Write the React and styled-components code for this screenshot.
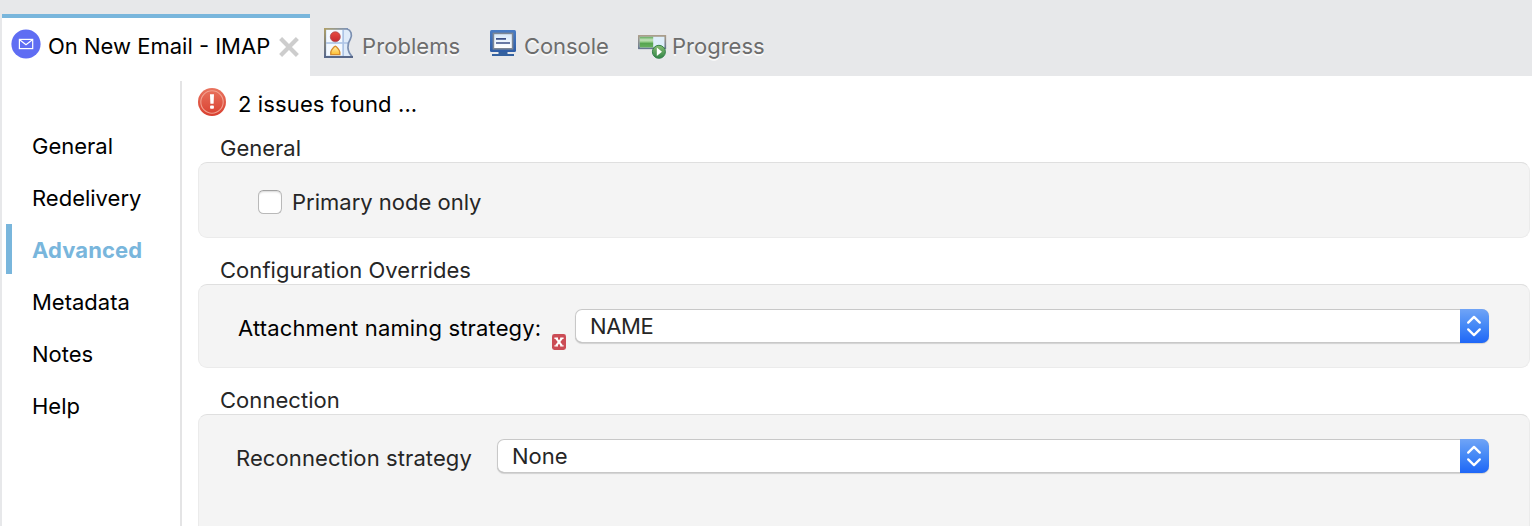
import React from "react";
import styled, { createGlobalStyle, css } from "styled-components";

const GlobalStyle = createGlobalStyle`
  *, *::before, *::after { box-sizing: border-box; }
  body {
    margin: 0;
    overflow: hidden;
    background: #fff;
    color: #000;
    font-family: Inter, "Liberation Sans", sans-serif;
    font-size: 22px;
    line-height: 28px;
  }
`;

const Window = styled.div`
  display: flex;
  flex-direction: column;
  width: 1532px;
  height: 526px;
  overflow: hidden;
`;

const TabBar = styled.header`
  display: flex;
  align-items: flex-end;
  flex: none;
  height: 76px;
  padding-left: 2px;
  background: #e7e8ea;
`;

const Label = styled.span`
  flex: none;
  white-space: nowrap;
  letter-spacing: ${(p) => p.$track ?? 0}px;
`;

const Tab = styled.div`
  display: flex;
  align-items: center;
  flex: none;
  height: 62px;
  width: ${(p) => p.$width}px;
  padding: 2px 0 0 14px;
  color: #6d6d6d;
  text-shadow: 0 2px 0 rgba(255, 255, 255, 0.75);
  ${(p) =>
    p.$active &&
    css`
      padding: 0 10px 2px 9px;
      border-top: 4px solid #79b6dc;
      background: #fff;
      color: #000;
      text-shadow: none;
    `}
`;

const TabIcon = styled.span`
  display: flex;
  flex: none;
  margin-right: ${(p) => p.$gap}px;
  padding-bottom: ${(p) => Math.max(p.$lift, 0)}px;
  padding-top: ${(p) => Math.max(-p.$lift, 0)}px;
`;

const CloseButton = styled.button`
  display: flex;
  margin: 2px 0 0 auto;
  padding: 0;
  border: 0;
  background: none;
`;

const Body = styled.div`
  display: flex;
  flex: 1;
  min-height: 0;
  border-left: 2px solid #e7e8ea;
`;

const Sidebar = styled.nav`
  display: flex;
  flex-direction: column;
  flex: none;
  width: 180px;
  margin-top: 5px;
  padding: 39px 0 0 4px;
  border-right: 2px solid #e4e4e5;
`;

const NavItem = styled.a`
  display: flex;
  align-items: center;
  height: 50px;
  margin-bottom: 2px;
  padding: 2px 0 0 20px;
  border-left: 6px solid ${(p) => (p.$active ? "#79b6dc" : "transparent")};
  color: ${(p) => (p.$active ? "#79b6dc" : "#000")};
  font-weight: ${(p) => (p.$active ? 700 : 400)};
`;

const Main = styled.main`
  flex: 1;
  min-width: 0;
  padding: 12px 2px 0 16px;
`;

const Issues = styled.div`
  display: flex;
  gap: 12px;
  height: 46px;
  svg { flex: none; }
  span { margin-top: 2px; }
`;

const Section = styled.section`
  margin-bottom: ${(p) => p.$after ?? 0}px;
`;

const Title = styled.h2`
  height: 28px;
  margin: 0 0 0 22px;
  color: #262626;
  font-size: 22px;
  font-weight: 400;
`;

const Group = styled.div`
  display: flex;
  align-items: flex-start;
  height: ${(p) => p.$height}px;
  padding: ${(p) => p.$pad};
  border: 1px solid #ebebeb;
  border-top-color: #dfdfdf;
  border-radius: 9px;
  background: #f4f4f4;
  color: #262626;
`;

const CheckRow = styled.label`
  display: flex;
  align-items: center;
  gap: 10px;
`;

const Checkbox = styled.span`
  width: 24px;
  height: 24px;
  border: 1px solid #b9b9b9;
  border-top-color: #a2a2a2;
  border-radius: 5.5px;
  background: #fff;
  box-shadow: inset 0 2px 2px -1px rgba(0, 0, 0, 0.16);
`;

const FieldLabel = styled.div`
  flex: none;
  width: ${(p) => p.$width}px;
  padding-top: 5px;
  color: ${(p) => (p.$dark ? "#000" : "#262626")};
`;

const ErrorMark = styled.div`
  display: flex;
  flex: none;
  width: 23px;
  padding-top: 25px;
`;

const Select = styled.div`
  display: flex;
  flex: 1;
  height: 34px;
  border-radius: 7px;
  background: #fff;
  box-shadow: inset 0 0 0 1px #c8c8c8, inset 0 -1px 0 #b0b0b0, 0 1px 1px rgba(0, 0, 0, 0.14);
`;

const SelectValue = styled.div`
  flex: 1;
  padding: 3px 0 0 15px;
`;

const Stepper = styled.div`
  display: flex;
  align-items: center;
  justify-content: center;
  width: 29px;
  border-radius: 0 7px 7px 0;
  background: linear-gradient(#70a4f6, #4488f6 50%, #1e66f7);
`;

const MailIcon = () => (
  <svg width="30" height="30" viewBox="0 0 30 30">
    <circle cx="15" cy="15" r="14.6" fill="#5f6df3" />
    <g fill="none" stroke="#fff" strokeWidth="1.2">
      <rect x="8.4" y="10.4" width="13.3" height="9.2" />
      <path d="M8.6 10.8 L15 15.8 L21.4 10.8" />
    </g>
  </svg>
);

const CloseIcon = () => (
  <svg width="22" height="22" viewBox="0 0 22 22">
    <path d="M2.6 2.6 L19.4 19.4 M19.4 2.6 L2.6 19.4" stroke="#cdcdcd" strokeWidth="4.2" />
  </svg>
);

const ProblemsIcon = () => (
  <svg width="30" height="30" viewBox="0 0 30 30">
    <defs>
      <linearGradient id="pbEdge" x1="0" y1="0" x2="0" y2="1">
        <stop offset="0" stopColor="#b0a068" />
        <stop offset="1" stopColor="#56668c" />
      </linearGradient>
      <linearGradient id="pbTop" gradientUnits="userSpaceOnUse" x1="0" y1="0" x2="24" y2="0">
        <stop offset="0" stopColor="#b0a068" />
        <stop offset="1" stopColor="#7c92b8" />
      </linearGradient>
      <linearGradient id="pbRed" x1="0" y1="0" x2="0" y2="1">
        <stop offset="0" stopColor="#e84a40" />
        <stop offset="1" stopColor="#c42931" />
      </linearGradient>
      <linearGradient id="pbYellow" x1="0" y1="0" x2="0" y2="1">
        <stop offset="0" stopColor="#fff0ae" />
        <stop offset="1" stopColor="#ffbd2c" />
      </linearGradient>
    </defs>
    <path d="M1 1 H23 C27 2 28.6 6.5 26.4 11 C23 16 22.5 23 28.5 29 H1 Z" fill="#dfebf9" />
    <path d="M3 2 H18 V14 H3 Z M3 16 H18 V27 H3 Z" fill="#f4f9ff" />
    <path d="M19.2 2 V28 M2 15 H24" stroke="#adc4e5" strokeWidth="1.6" />
    <path d="M23 1 C27 2 28.6 6.5 26.4 11 C23 16 22.5 23 28.5 29" fill="none" stroke="#7b8fb1" strokeWidth="1.7" />
    <rect x="0" y="0" width="24" height="1.8" fill="url(#pbTop)" />
    <rect x="0" y="0" width="2" height="30" fill="url(#pbEdge)" />
    <path d="M0 29 H29" stroke="#576789" strokeWidth="2" />
    <circle cx="11.3" cy="8.8" r="5" fill="url(#pbRed)" stroke="#a94a50" strokeWidth="0.8" />
    <path d="M11.3 18.3 C12.5 18.3 15.8 22.5 15.8 24 V26.6 H6.8 V24 C6.8 22.5 10.1 18.3 11.3 18.3 Z" fill="url(#pbYellow)" stroke="#d68b2c" strokeWidth="1.4" />
  </svg>
);

const ConsoleIcon = () => (
  <svg width="26" height="28" viewBox="0 0 26 28">
    <defs>
      <linearGradient id="csBody" x1="0" y1="0" x2="0" y2="1">
        <stop offset="0" stopColor="#4a7cc4" />
        <stop offset="1" stopColor="#2e5ca5" />
      </linearGradient>
      <linearGradient id="csScreen" x1="0" y1="0" x2="0" y2="1">
        <stop offset="0" stopColor="#d8e9fb" />
        <stop offset="1" stopColor="#fff" />
      </linearGradient>
    </defs>
    <rect x="0" y="0" width="26" height="22" rx="1.5" fill="url(#csBody)" />
    <rect x="2.6" y="2.6" width="20.8" height="17" fill="#7d8796" />
    <rect x="4.2" y="4.2" width="17.6" height="13.8" fill="url(#csScreen)" />
    <path d="M6 8.8 H16 M6 13 H20" stroke="#3b4f87" strokeWidth="1.7" />
    <path d="M8.5 22 H17.5 V24 H24 V26 H2 V24 H8.5 Z" fill="#34619f" />
  </svg>
);

const ProgressIcon = () => (
  <svg width="30" height="26" viewBox="0 0 30 26">
    <defs>
      <linearGradient id="pgFrame" x1="0" y1="0" x2="0" y2="1">
        <stop offset="0" stopColor="#a89b88" />
        <stop offset="1" stopColor="#66768f" />
      </linearGradient>
      <linearGradient id="pgBar" x1="0" y1="0" x2="0" y2="1">
        <stop offset="0" stopColor="#61ab5c" />
        <stop offset="0.3" stopColor="#c3e3bc" />
        <stop offset="0.5" stopColor="#8fca84" />
        <stop offset="0.6" stopColor="#55a350" />
        <stop offset="1" stopColor="#66b15e" />
      </linearGradient>
      <linearGradient id="pgBall" x1="0" y1="0" x2="0" y2="1">
        <stop offset="0" stopColor="#86bd72" />
        <stop offset="1" stopColor="#328547" />
      </linearGradient>
    </defs>
    <rect x="0.9" y="0.9" width="26.4" height="12.4" fill="#deeefa" stroke="url(#pgFrame)" strokeWidth="1.7" />
    <rect x="1.8" y="1.8" width="13.4" height="10.6" fill="url(#pgBar)" />
    <circle cx="20.9" cy="16.8" r="6.5" fill="url(#pgBall)" stroke="#34814a" strokeWidth="1" />
    <path d="M18.8 12.6 L24 16.8 L18.8 21 Z" fill="#fff" />
  </svg>
);

const AlertIcon = () => (
  <svg width="28" height="28" viewBox="0 0 28 28">
    <defs>
      <linearGradient id="alBall" x1="0" y1="0" x2="0" y2="1">
        <stop offset="0" stopColor="#e9745f" />
        <stop offset="1" stopColor="#d93f2f" />
      </linearGradient>
    </defs>
    <circle cx="14" cy="14" r="14" fill="url(#alBall)" />
    <circle cx="14" cy="14" r="11.2" fill="none" stroke="#f1a08f" strokeWidth="1.1" />
    <path d="M12 6.2 H16 L15.6 15.8 H12.4 Z" fill="#fff" />
    <rect x="12.1" y="17.6" width="3.8" height="3.2" rx="0.8" fill="#fff" />
  </svg>
);

const ErrorIcon = () => (
  <svg width="14" height="16" viewBox="0 0 14 16">
    <rect width="14" height="16" rx="2.4" fill="#cb4c55" />
    <path d="M4.2 4.4 L9.8 11.6 M9.8 4.4 L4.2 11.6" stroke="#fff" strokeWidth="2.1" />
    <path d="M2.4 4.2 H6 M8.2 4.2 H11.6 M2.4 11.9 H6 M8.2 11.9 H11.6" stroke="#fff" strokeWidth="1.4" />
  </svg>
);

const ChevronsIcon = () => (
  <svg width="17" height="22" viewBox="0 0 17 22">
    <path d="M2.2 7.6 L8 1.9 L13.8 7.6 M2.2 14.4 L8 20.1 L13.8 14.4" fill="none" stroke="#fff" strokeWidth="2.3" strokeLinecap="round" strokeLinejoin="round" />
  </svg>
);

const Dropdown = ({ value, track }) => (
  <Select>
    <SelectValue><Label $track={track}>{value}</Label></SelectValue>
    <Stepper><ChevronsIcon /></Stepper>
  </Select>
);

const NAV = [
  { name: "General" },
  { name: "Redelivery" },
  { name: "Advanced", track: 0.1, active: true },
  { name: "Metadata" },
  { name: "Notes" },
  { name: "Help" },
];

export default function App() {
  return (
    <Window>
      <GlobalStyle />
      <TabBar>
        <Tab $active $width={308}>
          <TabIcon $gap={7} $lift={4}><MailIcon /></TabIcon>
          <Label>On New Email - IMAP</Label>
          <CloseButton aria-label="Close"><CloseIcon /></CloseButton>
        </Tab>
        <Tab $width={166}>
          <TabIcon $gap={8} $lift={6}><ProblemsIcon /></TabIcon>
          <Label $track={0.08}>Problems</Label>
        </Tab>
        <Tab $width={148}>
          <TabIcon $gap={8} $lift={4}><ConsoleIcon /></TabIcon>
          <Label $track={-0.08}>Console</Label>
        </Tab>
        <Tab $width={150}>
          <TabIcon $gap={4} $lift={-4}><ProgressIcon /></TabIcon>
          <Label>Progress</Label>
        </Tab>
      </TabBar>
      <Body>
        <Sidebar>
          {NAV.map((item) => (
            <NavItem key={item.name} $active={item.active}>
              <Label $track={item.track}>{item.name}</Label>
            </NavItem>
          ))}
        </Sidebar>
        <Main>
          <Issues>
            <AlertIcon />
            <Label $track={0.12}>2 issues found ...</Label>
          </Issues>
          <Section $after={18}>
            <Title><Label>General</Label></Title>
            <Group $height={76} $pad="25px 0 0 59px">
              <CheckRow>
                <Checkbox />
                <Label>Primary node only</Label>
              </CheckRow>
            </Group>
          </Section>
          <Section $after={18}>
            <Title><Label $track={0.05}>Configuration Overrides</Label></Title>
            <Group $height={84} $pad="24px 40px 0 39px">
              <FieldLabel $dark $width={314}><Label $track={0.15}>Attachment naming strategy:</Label></FieldLabel>
              <ErrorMark><ErrorIcon /></ErrorMark>
              <Dropdown value="NAME" track={-0.35} />
            </Group>
          </Section>
          <Section>
            <Title><Label $track={0.05}>Connection</Label></Title>
            <Group $height={140} $pad="24px 40px 0 37px">
              <FieldLabel $width={261}><Label $track={0.1}>Reconnection strategy</Label></FieldLabel>
              <Dropdown value="None" />
            </Group>
          </Section>
        </Main>
      </Body>
    </Window>
  );
}
